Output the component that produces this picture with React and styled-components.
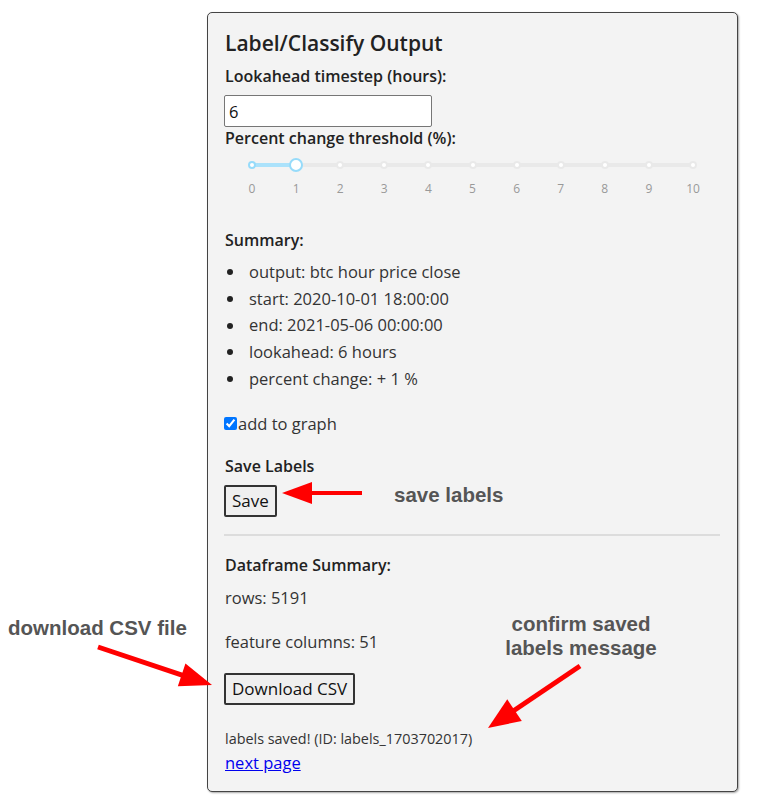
import React from "react";
import styled, { createGlobalStyle } from "styled-components";

const GlobalStyle = createGlobalStyle`
  body {
    margin: 0;
    background: #fff;
    font-family: "Open Sans", "Noto Sans", sans-serif;
    color: #222;
  }
`;

const Page = styled.div`
  position: relative;
  width: 761px;
  height: 810px;
  padding-top: 12px;
  box-sizing: border-box;
`;

const Card = styled.div`
  display: flex;
  flex-direction: column;
  align-items: flex-start;
  margin-left: 207px;
  width: 531px;
  height: 780px;
  box-sizing: border-box;
  background: #f3f3f3;
  border: 1px solid #444;
  border-radius: 5px;
  box-shadow: 1px 1px 2px rgba(0, 0, 0, 0.35);
  padding: 16px 17px 0 16px;
`;

const Section = styled.div`
  display: flex;
  flex-direction: column;
  align-items: flex-start;
  align-self: stretch;
  gap: ${(p) => p.$gap || 0}px;
  margin-top: ${(p) => p.$mt || 0}px;
`;

const Title = styled.h2`
  margin: 0 0 0 1px;
  font-size: 21px;
  line-height: 28px;
  font-weight: 600;
  color: #222;
`;

const Label = styled.div`
  margin-left: 1px;
  font-size: 16px;
  line-height: 22px;
  font-weight: 600;
  color: #222;
`;

const Text = styled.div`
  margin-left: 1px;
  font-size: ${(p) => (p.$small ? 14.4 : 16.5)}px;
  line-height: ${(p) => (p.$small ? 20 : 22)}px;
  color: #333;
`;

const NumberInput = styled.input`
  display: block;
  width: 208px;
  height: 32px;
  box-sizing: border-box;
  border: 1px solid #767676;
  border-radius: 2px;
  padding: 0 4px;
  font-family: inherit;
  font-size: 16.5px;
  color: #111;
  background: #fff;
`;

const SliderWrap = styled.div`
  position: relative;
  margin-left: 28px;
  width: 441px;
  height: 50px;
`;

const Rail = styled.div`
  position: absolute;
  top: 14px;
  left: 0;
  right: 0;
  height: 4px;
  border-radius: 2px;
  background: #e9e9e9;
`;

const Track = styled.div`
  position: absolute;
  top: 14px;
  left: 0;
  height: 4px;
  border-radius: 2px;
  background: #abe2fb;
`;

const Dot = styled.span`
  position: absolute;
  top: 12px;
  width: 8px;
  height: 8px;
  box-sizing: border-box;
  margin-left: -4px;
  border-radius: 50%;
  background: #fff;
  border: 2px solid ${(p) => (p.$active ? "#96dbfa" : "#e9e9e9")};
`;

const Handle = styled.span`
  position: absolute;
  top: 9px;
  width: 14px;
  height: 14px;
  box-sizing: border-box;
  margin-left: -7px;
  border-radius: 50%;
  background: #fff;
  border: 2px solid #96dbfa;
`;

const Mark = styled.span`
  position: absolute;
  top: 32px;
  transform: translateX(-50%);
  font-size: 12px;
  line-height: 16px;
  color: #999;
`;

const List = styled.ul`
  display: flex;
  flex-direction: column;
  margin: 0;
  padding: 0;
  list-style: none;
`;

const Item = styled.li`
  display: flex;
  align-items: center;
  gap: 16px;
  padding-left: 3px;
  font-size: 16.5px;
  line-height: 26.7px;
  color: #333;

  &::before {
    content: "";
    width: 6px;
    height: 6px;
    border-radius: 50%;
    background: #222;
  }
`;

const CheckRow = styled.label`
  display: flex;
  align-items: center;
  font-size: 16.5px;
  line-height: 22px;
  color: #333;

  input {
    margin: 0 1px 0 0;
    width: 13px;
    height: 13px;
  }
`;

const Button = styled.button`
  display: block;
  height: 32px;
  padding: 0 6px;
  background: #efefef;
  border: 2px solid #333;
  border-radius: 2px;
  font-family: "Open Sans", sans-serif;
  font-size: 17px;
  color: #111;
`;

const Divider = styled.hr`
  align-self: stretch;
  margin: 17px 0 0 0;
  border: none;
  height: 2px;
  background: #dcdcdc;
`;

const Link = styled.a`
  margin-left: 1px;
  font-size: 16.5px;
  line-height: 22px;
  color: #0000ee;
  text-decoration: underline;
`;

const Note = styled.div`
  position: absolute;
  left: ${(p) => p.$x}px;
  top: ${(p) => p.$y}px;
  width: ${(p) => (p.$w ? p.$w + "px" : "auto")};
  text-align: ${(p) => (p.$w ? "center" : "left")};
  font-family: "Liberation Sans", Arial, sans-serif;
  font-weight: bold;
  font-size: 20.5px;
  line-height: 24px;
  color: #555;
  white-space: nowrap;
`;

const Overlay = styled.svg`
  position: absolute;
  left: 0;
  top: 0;
  pointer-events: none;
`;

const Arrow = ({ x1, y1, x2, y2, len = 30, wid = 22, stroke = 4 }) => {
  const dx = x2 - x1;
  const dy = y2 - y1;
  const d = Math.hypot(dx, dy);
  const ux = dx / d;
  const uy = dy / d;
  const bx = x2 - ux * len;
  const by = y2 - uy * len;
  const px = -uy * (wid / 2);
  const py = ux * (wid / 2);
  return (
    <g fill="#ff0000" stroke="none">
      <line
        x1={x1}
        y1={y1}
        x2={bx + ux * 2}
        y2={by + uy * 2}
        stroke="#ff0000"
        strokeWidth={stroke}
      />
      <polygon
        points={`${x2},${y2} ${bx + px},${by + py} ${bx - px},${by - py}`}
      />
    </g>
  );
};

const summary = [
  "output: btc hour price close",
  "start: 2020-10-01 18:00:00",
  "end: 2021-05-06 00:00:00",
  "lookahead: 6 hours",
  "percent change: + 1 %",
];

const marks = [0, 1, 2, 3, 4, 5, 6, 7, 8, 9, 10];

export default function App() {
  const value = 1;
  return (
    <>
      <GlobalStyle />
      <Page>
        <Card>
          <Section $gap={8}>
            <Title>Label/Classify Output</Title>
            <Label>Lookahead timestep (hours):</Label>
            <NumberInput type="number" defaultValue={6} />
          </Section>
          <Label>Percent change threshold (%):</Label>
          <SliderWrap>
            <Rail />
            <Track style={{ width: `${value * 10}%` }} />
            {marks.map((m) => (
              <Dot key={m} $active={m <= value} style={{ left: `${m * 10}%` }} />
            ))}
            <Handle style={{ left: `${value * 10}%` }} />
            {marks.map((m) => (
              <Mark key={m} style={{ left: `${m * 10}%` }}>
                {m}
              </Mark>
            ))}
          </SliderWrap>

          <Section $mt={30} $gap={8}>
            <Label>Summary:</Label>
            <List>
              {summary.map((s) => (
                <Item key={s}>{s}</Item>
              ))}
            </List>
          </Section>

          <Section $mt={20}>
            <CheckRow>
              <input type="checkbox" defaultChecked />
              add to graph
            </CheckRow>
          </Section>

          <Section $mt={20} $gap={8}>
            <Label>Save Labels</Label>
            <Button>Save</Button>
          </Section>

          <Divider />

          <Section $mt={18} $gap={11}>
            <Label>Dataframe Summary:</Label>
            <Text>rows: 5191</Text>
          </Section>
          <Section $mt={22} $gap={20}>
            <Text>feature columns: 51</Text>
            <Button>Download CSV</Button>
          </Section>
          <Section $mt={24} $gap={3}>
            <Text $small>labels saved! (ID: labels_1703702017)</Text>
            <Link href="#">next page</Link>
          </Section>
        </Card>

        <Note $x={394} $y={483}>save labels</Note>
        <Note $x={8} $y={616}>download CSV file</Note>
        <Note $x={471} $y={612} $w={220}>
          confirm saved
          <br />
          labels message
        </Note>

        <Overlay width="761" height="810" viewBox="0 0 761 810">
          <Arrow x1={362} y1={493} x2={282} y2={493} len={30} wid={22} stroke={4} />
          <Arrow x1={98} y1={647} x2={212} y2={685} len={32} wid={24} stroke={5} />
          <Arrow x1={580} y1={666} x2={488} y2={728} len={32} wid={26} stroke={5} />
        </Overlay>
      </Page>
    </>
  );
}
